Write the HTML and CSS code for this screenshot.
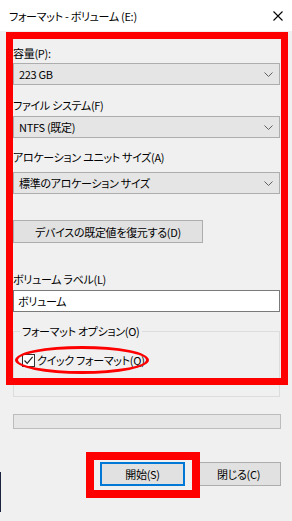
FILE: index.html
```html
<!DOCTYPE html>
<html lang="ja">
<head>
  <meta charset="UTF-8">
  <meta name="viewport" content="width=device-width, initial-scale=1.0">
  <title>フォーマット - ボリューム (E:)</title>
  <link rel="stylesheet" href="styles.css">
</head>
<body>
  <div class="window">
    <!-- Title Bar -->
    <div class="titlebar">
      <span class="title">フォーマット - ボリューム (E:)</span>
      <svg class="close" width="10" height="10" viewBox="0 0 10 10">
        <path d="M0.5 0.5 L9.5 9.5 M9.5 0.5 L0.5 9.5" stroke="#000" stroke-width="1.1" fill="none"/>
      </svg>
    </div>

    <!-- Dialog Body -->
    <div class="dialog">
      <div class="field-label first">容量(P):</div>
      <div class="combo">
        <span>223 GB</span>
        <svg class="chev" width="9" height="5" viewBox="0 0 9 5"><path d="M0.5 0.5 L4.5 4.5 L8.5 0.5" stroke="#606060" fill="none"/></svg>
      </div>

      <div class="field-label">ファイル システム(F)</div>
      <div class="combo">
        <span>NTFS (既定)</span>
        <svg class="chev" width="9" height="5" viewBox="0 0 9 5"><path d="M0.5 0.5 L4.5 4.5 L8.5 0.5" stroke="#606060" fill="none"/></svg>
      </div>

      <div class="field-label alloc">アロケーション ユニット サイズ(A)</div>
      <div class="combo alloc-combo">
        <span>標準のアロケーション サイズ</span>
        <svg class="chev" width="9" height="5" viewBox="0 0 9 5"><path d="M0.5 0.5 L4.5 4.5 L8.5 0.5" stroke="#606060" fill="none"/></svg>
      </div>

      <button class="btn restore">デバイスの既定値を復元する(D)</button>

      <div class="field-label volume">ボリューム ラベル(L)</div>
      <input class="textbox" type="text" value="ボリューム">

      <!-- Format Options -->
      <fieldset class="group">
        <legend>フォーマット オプション(O)</legend>
        <label class="check">
          <span class="box">
            <svg width="11" height="11" viewBox="0 0 11 11"><path d="M1.5 5.5 L4.2 8.3 L9.6 1.8" stroke="#222" stroke-width="1.2" fill="none"/></svg>
          </span>
          クイック フォーマット(Q)
        </label>
      </fieldset>

      <div class="progress"></div>

      <div class="actions">
        <button class="btn primary">開始(S)</button>
        <button class="btn">閉じる(C)</button>
      </div>
    </div>

    <!-- Annotation marks -->
    <div class="mark mark-main"></div>
    <div class="mark mark-quick"></div>
    <div class="mark mark-start"></div>
    <div class="desk-edge"></div>
  </div>
</body>
</html>
```

FILE: styles.css
```css
/* General Styles */
body {
  margin: 0;
  padding: 0;
  background: #f0f0f0;
  color: #000;
  font-family: "Noto Sans CJK JP", "Noto Sans", sans-serif;
  font-size: 11px;
  letter-spacing: -0.3px;
  font-feature-settings: "palt";
  overflow: hidden;
}

.window {
  position: relative;
  width: 292px;
  height: 521px;
  background: #f0f0f0;
}

/* Title Bar */
.titlebar {
  height: 31px;
  background: #fff;
  display: flex;
  align-items: center;
  justify-content: space-between;
  padding: 0 9px;
}

.title {
  line-height: 16px;
}

/* Dialog Body */
.dialog {
  padding: 0 12px 0 13px;
}

.field-label {
  line-height: 16px;
  margin-top: 12px;
}

.field-label.first {
  margin-top: 14px;
}

.field-label.alloc {
  margin-top: 11px;
}

.field-label.volume {
  margin-top: 28px;
}

.combo {
  height: 22px;
  box-sizing: border-box;
  margin-top: 3px;
  padding: 0 6px 0 5px;
  background: #e5e5e5;
  border: 1px solid #adadad;
  display: flex;
  align-items: center;
  justify-content: space-between;
}

.first + .combo {
  margin-top: 2px;
}

.alloc-combo {
  margin-top: 7px;
}

.btn {
  height: 24px;
  box-sizing: border-box;
  padding: 0;
  background: #e1e1e1;
  border: 1px solid #adadad;
  font-family: inherit;
  font-size: 11px;
  letter-spacing: -0.3px;
  font-feature-settings: "palt";
  color: #000;
}

.restore {
  display: block;
  width: 190px;
  height: 23px;
  margin-top: 26px;
}

.textbox {
  display: block;
  width: 100%;
  height: 22px;
  box-sizing: border-box;
  margin: 3px 0 0;
  padding: 0 4px;
  background: #fff;
  border: 1px solid #7a7a7a;
  font-family: inherit;
  font-size: 11px;
  letter-spacing: -0.3px;
  font-feature-settings: "palt";
  color: #000;
  outline: none;
}

/* Group Box */
.group {
  margin: 11px 0 0;
  padding: 13px 0 28px 8px;
  border: 1px solid #dcdcdc;
}

.group legend {
  padding: 0 2px;
  margin-left: -2px;
  line-height: 16px;
}

.check {
  display: flex;
  align-items: center;
  gap: 2px;
  line-height: 16px;
}

.box {
  width: 13px;
  height: 13px;
  box-sizing: border-box;
  border: 1px solid #333;
  background: #fff;
  display: flex;
  align-items: center;
  justify-content: center;
}

.progress {
  height: 15px;
  box-sizing: border-box;
  margin: 17px -1px 0 0;
  background: #e6e6e6;
  border: 1px solid #bcbcbc;
}

.actions {
  display: flex;
  justify-content: flex-end;
  gap: 11px;
  margin: 33px -1px 0 0;
}

.actions .btn {
  width: 85px;
}

.btn.primary {
  border: 2px solid #0078d7;
}

/* Annotation marks */
.mark {
  position: absolute;
  box-sizing: border-box;
  border: 7px solid #ff0000;
}

.mark-main {
  left: 6px;
  top: 32px;
  width: 282px;
  height: 353px;
}

.mark-quick {
  left: 15px;
  top: 346px;
  width: 134px;
  height: 28px;
  border-width: 3px;
  border-radius: 50%;
}

.mark-start {
  left: 86px;
  top: 452px;
  width: 114px;
  height: 46px;
  border-width: 8px;
}

.desk-edge {
  position: absolute;
  left: 0;
  top: 472px;
  width: 1px;
  height: 40px;
  background: #1c2540;
}
```
